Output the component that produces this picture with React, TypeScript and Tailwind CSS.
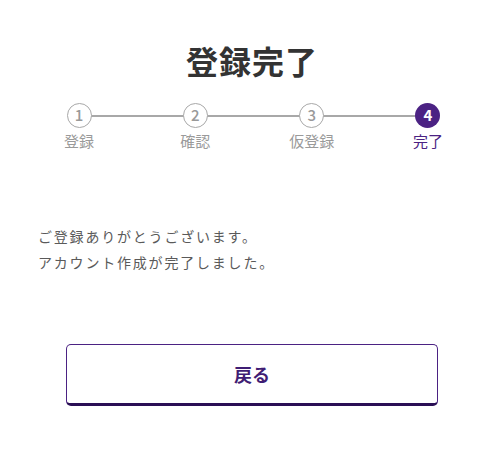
const steps = [
  { n: "1", label: "登録" },
  { n: "2", label: "確認" },
  { n: "3", label: "仮登録" },
  { n: "4", label: "完了" },
];

const Stepper = () => {
  return (
    <div className="relative flex justify-between pl-[54px] pr-[45px]">
      <div className="absolute left-[90px] right-[70px] top-[12px] h-[1.5px] bg-[#a8a8a8]" />
      {steps.map((s, i) => {
        const done = i === steps.length - 1;
        return (
          <div key={s.n} className="relative flex w-[50px] flex-col items-center">
            <div
              className={
                done
                  ? "flex h-[25px] w-[25px] items-center justify-center rounded-full bg-[#4b2283] text-[15px] font-semibold text-white"
                  : "flex h-[25px] w-[25px] items-center justify-center rounded-full border-[1.5px] border-[#a8a8a8] bg-white text-[15px] font-medium text-[#999999]"
              }
            >
              {s.n}
            </div>
            <span
              className={
                done
                  ? "mt-[3px] whitespace-nowrap text-[15px] leading-[20px] text-[#4b2283]"
                  : "mt-[3px] whitespace-nowrap text-[15px] leading-[20px] text-[#9a9a9a]"
              }
            >
              {s.label}
            </span>
          </div>
        );
      })}
    </div>
  );
};

export default function App() {
  return (
    <div className="min-h-[471px] w-[498px] bg-white font-['Noto_Sans_CJK_JP','Noto_Sans',sans-serif]">
      <div className="pt-[37px] pl-[6px]">
        <h1 className="text-center text-[32px] font-bold leading-[46px] tracking-[1px] text-[#333333]">
          登録完了
        </h1>
      </div>
      <div className="mt-[20px]">
        <Stepper />
      </div>
      <div className="mt-[72px] px-[38px] text-[14px] leading-[26px] tracking-[1.8px] text-[#5a5a5a]">
        <p>ご登録ありがとうございます。</p>
        <p>アカウント作成が完了しました。</p>
      </div>
      <div className="mt-[69px] px-[66px]">
        <button className="flex h-[62px] w-[372px] items-center justify-center rounded-[5px] border border-b-[3px] border-[#4b2283] border-b-[#2a0f55] bg-white text-[18px] font-bold text-[#3f1d74]">
          戻る
        </button>
      </div>
    </div>
  );
}
